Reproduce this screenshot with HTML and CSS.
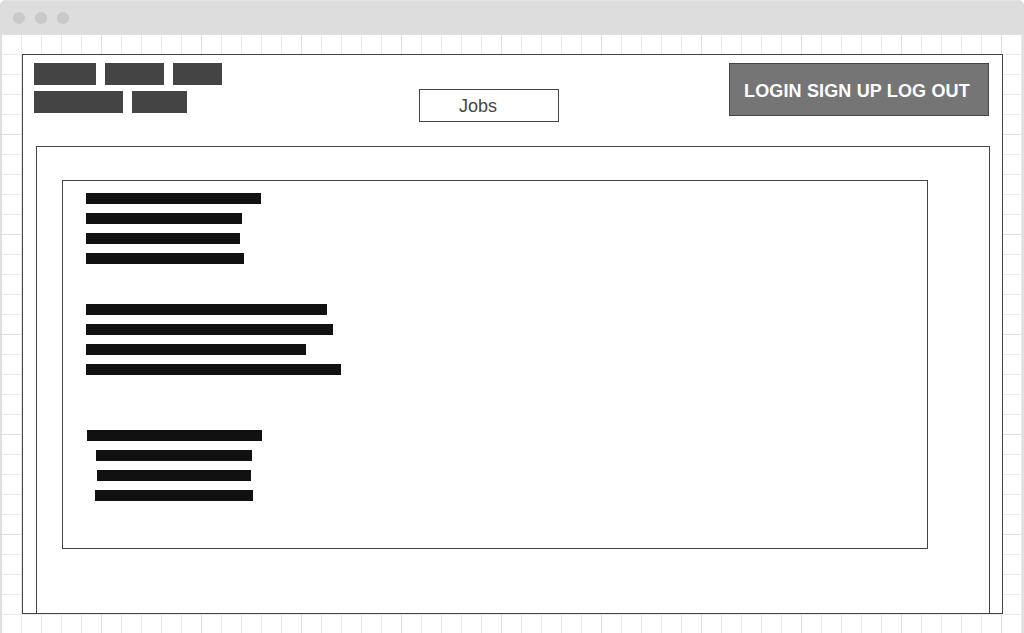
FILE: index.html
```html
<!DOCTYPE html>
<html lang="en">
<head>
<meta charset="utf-8">
<title>Jobs wireframe</title>
<link rel="stylesheet" href="styles.css">
</head>
<body>
<div class="window">
  <div class="titlebar">
    <span class="dot"></span><span class="dot"></span><span class="dot"></span>
  </div>
  <div class="canvas">
    <div class="frame">
      <header class="header">
        <nav class="nav">
          <div class="nav-row">
            <span class="nav-item" style="width:62px"></span>
            <span class="nav-item" style="width:59px"></span>
            <span class="nav-item" style="width:49px"></span>
          </div>
          <div class="nav-row">
            <span class="nav-item" style="width:89px"></span>
            <span class="nav-item" style="width:55px"></span>
          </div>
        </nav>
        <div class="title-box">Jobs</div>
        <div class="auth">LOGIN SIGN UP LOG OUT</div>
      </header>
      <section class="panel">
        <div class="card">
          <div class="group">
            <span class="bar" style="width:175px"></span>
            <span class="bar" style="width:156px"></span>
            <span class="bar" style="width:154px"></span>
            <span class="bar" style="width:158px"></span>
          </div>
          <div class="group group-2">
            <span class="bar" style="width:241px"></span>
            <span class="bar" style="width:247px"></span>
            <span class="bar" style="width:220px"></span>
            <span class="bar" style="width:255px"></span>
          </div>
          <div class="group group-3">
            <span class="bar off-1" style="width:175px"></span>
            <span class="bar off-10" style="width:156px"></span>
            <span class="bar off-11" style="width:154px"></span>
            <span class="bar off-9" style="width:158px"></span>
          </div>
        </div>
      </section>
    </div>
  </div>
</div>
</body>
</html>
```

FILE: styles.css
```css
* { box-sizing: border-box; }

html, body {
  margin: 0;
  padding: 0;
  background: #ffffff;
  font-family: "Liberation Sans", Arial, sans-serif;
}

.window {
  width: 1024px;
  height: 633px;
  display: flex;
  flex-direction: column;
  background: #e0e0e0;
  border-radius: 6px 6px 0 0;
  overflow: hidden;
}

.titlebar {
  height: 34px;
  flex: 0 0 34px;
  background: #dddddd;
  border-top: 1px solid #e4e4e4;
  display: flex;
  align-items: center;
  gap: 10px;
  padding: 0 0 0 13px;
}

.dot {
  width: 12px;
  height: 12px;
  border-radius: 50%;
  background: #c9c9c9;
}

.canvas {
  flex: 1;
  margin: 0 2px;
  padding: 20px 0 0 20px;
  background-color: #ffffff;
  background-image:
    linear-gradient(to right, #e0e0e0 1px, transparent 1px),
    linear-gradient(to bottom, #e0e0e0 1px, transparent 1px),
    linear-gradient(to right, #eaeaea 1px, transparent 1px),
    linear-gradient(to bottom, #eaeaea 1px, transparent 1px);
  background-size: 100px 100px, 100px 100px, 20px 20px, 20px 20px;
  background-position: -1px 0, 0 0, -1px 0, 0 0;
}

.frame {
  width: 981px;
  height: 560px;
  border: 1px solid #444444;
  background: #ffffff;
  display: flex;
  flex-direction: column;
  overflow: hidden;
}

.header {
  height: 91px;
  flex: 0 0 91px;
  display: flex;
  align-items: flex-start;
  padding: 8px 13px 0 11px;
}

.nav {
  display: flex;
  flex-direction: column;
  gap: 6px;
  width: 188px;
}

.nav-row {
  display: flex;
  gap: 9px;
}

.nav-item {
  display: block;
  height: 22px;
  background: #444444;
}

.title-box {
  margin: 26px 0 0 197px;
  width: 140px;
  height: 33px;
  border: 1px solid #444444;
  padding: 6px 0 0 39px;
  font-size: 18px;
  line-height: 20px;
  color: #444444;
}

.auth {
  margin-left: auto;
  width: 260px;
  height: 53px;
  background: #757575;
  border: 1px solid #454545;
  color: #ffffff;
  font-weight: bold;
  font-size: 18px;
  line-height: 20px;
  letter-spacing: 0.15px;
  padding: 17px 0 0 14px;
  white-space: nowrap;
}

.panel {
  flex: 1;
  margin: 0 12px 0 13px;
  border: 1px solid #444444;
  border-bottom: none;
  padding: 33px 0 0 25px;
}

.card {
  width: 866px;
  height: 369px;
  border: 1px solid #444444;
  padding: 12px 0 0 23px;
}

.group {
  display: flex;
  flex-direction: column;
  align-items: flex-start;
  gap: 9px;
}

.group-2 { margin-top: 40px; }
.group-3 { margin-top: 55px; }

.bar {
  display: block;
  height: 11px;
  background: #111111;
}

.off-1 { margin-left: 1px; }
.off-9 { margin-left: 9px; }
.off-10 { margin-left: 10px; }
.off-11 { margin-left: 11px; }
```
